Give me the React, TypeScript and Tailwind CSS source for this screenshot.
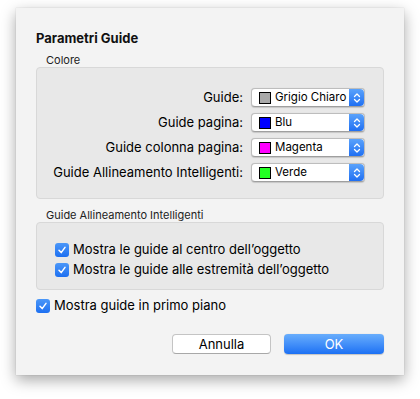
import React from 'react';

const font = { fontFamily: 'Inter, "Liberation Sans", Arial, sans-serif' };

function Stepper() {
  return (
    <div className="flex h-full w-[15px] items-center justify-center rounded-r-[4px] bg-gradient-to-b from-[#5aa2fb] to-[#1f6ff2]">
      <svg width="8" height="12" viewBox="0 0 8 12" fill="none" stroke="white" strokeWidth="1.3" strokeLinecap="round" strokeLinejoin="round">
        <path d="M1.5 4.5 L4 2 L6.5 4.5" />
        <path d="M1.5 7.5 L4 10 L6.5 7.5" />
      </svg>
    </div>
  );
}

function Popup({ color, label }: { color: string; label: string }) {
  return (
    <div className="flex h-[19px] w-[114px] items-stretch rounded-[4px] border border-[#bdbdbd] border-b-[#9f9f9f] bg-white shadow-[0_0.5px_1px_rgba(0,0,0,0.15)]">
      <div className="flex min-w-0 flex-1 items-center pl-[7px]">
        <span className="h-[12px] w-[12px] shrink-0 border border-black" style={{ backgroundColor: color }} />
        <span className="ml-[4px] whitespace-nowrap text-[11.5px] leading-none text-black">{label}</span>
      </div>
      <Stepper />
    </div>
  );
}

function Check({ label }: { label: string }) {
  return (
    <div className="flex h-[20px] items-center">
      <span className="flex h-[14px] w-[14px] items-center justify-center rounded-[3px] bg-gradient-to-b from-[#4b97f8] to-[#1c6ff1]">
        <svg width="10" height="10" viewBox="0 0 10 10" fill="none" stroke="white" strokeWidth="1.5" strokeLinecap="round" strokeLinejoin="round">
          <path d="M2 5.3 L4.2 7.6 L8 2.4" />
        </svg>
      </span>
      <span className="ml-[4px] text-[13px] text-black">{label}</span>
    </div>
  );
}

const rows = [
  { name: 'Guide:', color: '#a9a9a9', value: 'Grigio Chiaro' },
  { name: 'Guide pagina:', color: '#0000ff', value: 'Blu' },
  { name: 'Guide colonna pagina:', color: '#ff00ff', value: 'Magenta' },
  { name: 'Guide Allineamento Intelligenti:', color: '#22ff22', value: 'Verde' },
];

export default function App() {
  return (
    <div className="h-[399px] w-[420px] bg-white pl-[16px] pt-[8px]" style={font}>
      <div className="flex h-[367px] w-[388px] flex-col bg-[#f3f3f3] px-[20px] pt-[22px] shadow-[0_5px_14px_rgba(0,0,0,0.35),0_0_1px_rgba(0,0,0,0.2)]">
        <h1 className="h-[16px] text-[13px] font-bold leading-[16px] text-[#111]">Parametri Guide</h1>

        <div className="ml-[10px] mt-[7px] h-[14px] text-[11px] leading-[14px] text-[#222]">Colore</div>
        <div className="flex h-[132px] flex-col gap-[6px] rounded-[4px] border border-[#d8d8d8] bg-[#e8e8e8] pr-[18px] pt-[20px]">
          {rows.map((r) => (
            <div key={r.name} className="flex h-[19px] items-center justify-end gap-[8px]">
              <span className="text-[13px] text-black">{r.name}</span>
              <Popup color={r.color} label={r.value} />
            </div>
          ))}
        </div>

        <div className="ml-[10px] mt-[9px] h-[14px] text-[11px] leading-[14px] text-[#222]">Guide Allineamento Intelligenti</div>
        <div className="flex h-[68px] flex-col rounded-[4px] border border-[#d8d8d8] bg-[#e8e8e8] pl-[18px] pt-[17px]">
          <Check label="Mostra le guide al centro dell’oggetto" />
          <Check label="Mostra le guide alle estremità dell’oggetto" />
        </div>

        <div className="mt-[6px]">
          <Check label="Mostra guide in primo piano" />
        </div>

        <div className="mt-[18px] flex justify-end gap-[13px]">
          <button className="h-[20px] w-[99px] rounded-[4px] border border-[#c4c4c4] border-b-[#a8a8a8] bg-white text-[13px] leading-none text-black">
            Annulla
          </button>
          <button className="h-[20px] w-[100px] rounded-[4px] bg-gradient-to-b from-[#68adfc] to-[#1b70f4] text-[13px] leading-none text-white shadow-[0_0.5px_1px_rgba(0,0,0,0.2)]">
            OK
          </button>
        </div>
      </div>
    </div>
  );
}
